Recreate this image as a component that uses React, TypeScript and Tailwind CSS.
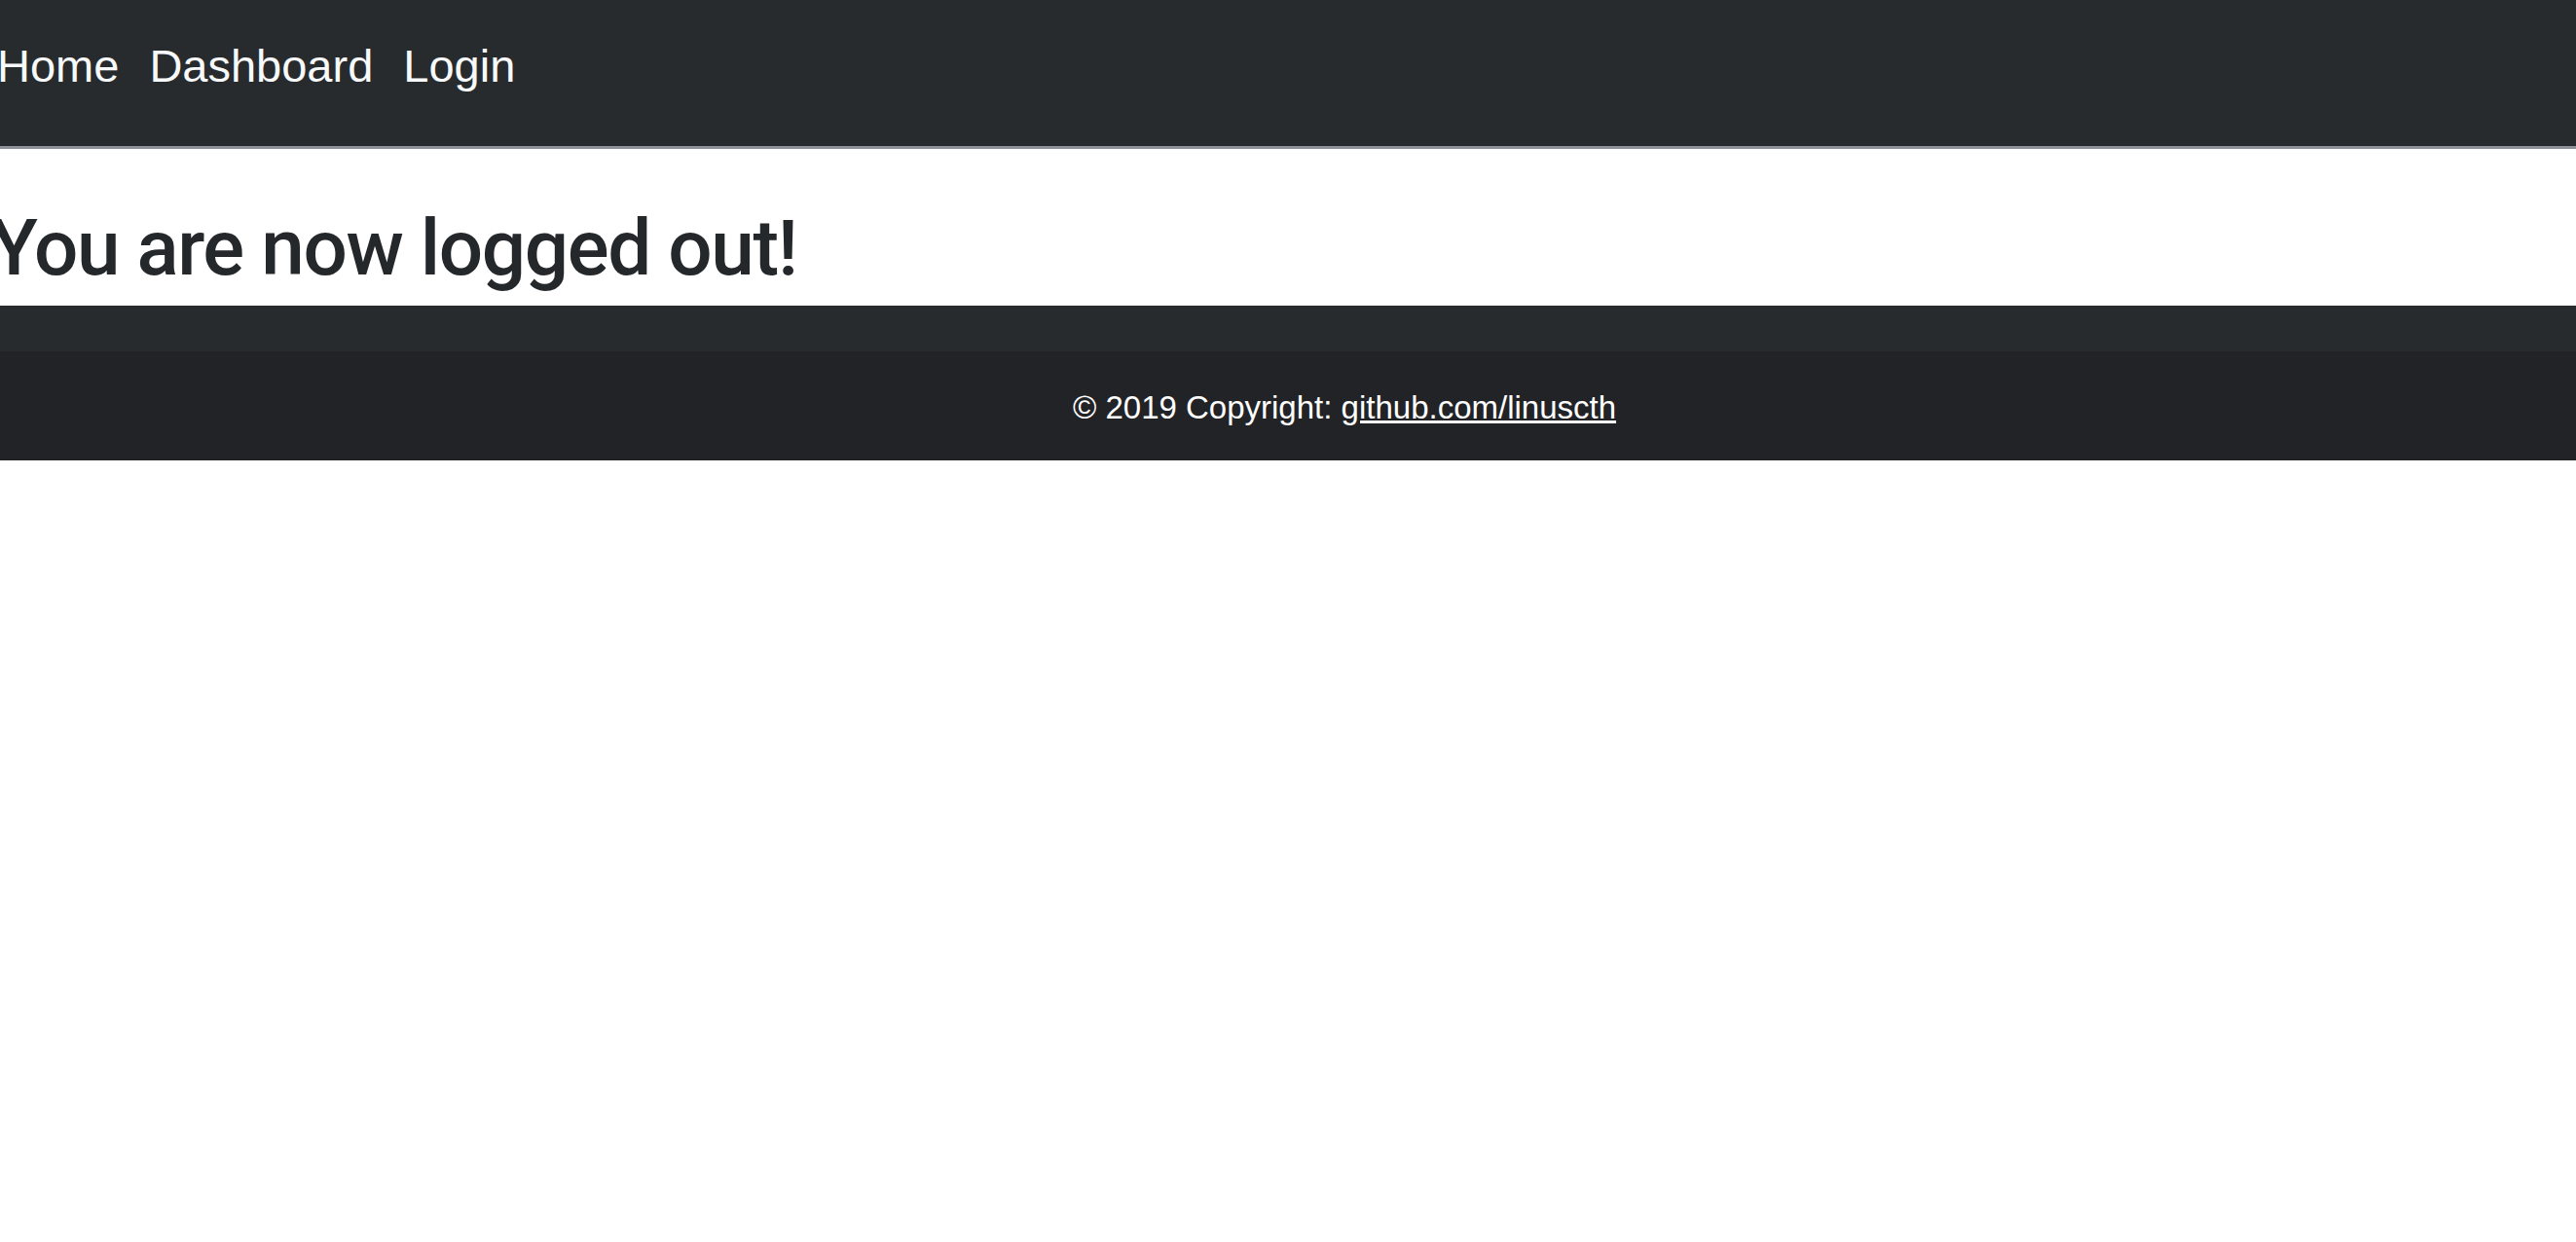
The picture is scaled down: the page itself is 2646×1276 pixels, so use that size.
const font = { fontFamily: '"Liberation Sans", Arial, sans-serif' };

const App = () => {
  return (
    <div className="min-h-screen bg-white" style={font}>
      {/* Navbar */}
      <header className="h-[153px] bg-[#272b2e] border-b-[3px] border-[#8d9299]">
        <nav className="flex items-center gap-[31px] pt-[40px] -ml-[3px]">
          <a href="#" className="text-[47px] leading-[56px] text-[#f8f9fa]">Home</a>
          <a href="#" className="text-[47px] leading-[56px] text-[#f8f9fa]">Dashboard</a>
          <a href="#" className="text-[47px] leading-[56px] text-[#f8f9fa]">Login</a>
        </nav>
      </header>

      {/* Content */}
      <main className="pt-[54px] pb-[11px] -ml-[10px]">
        <h1 className="font-['Roboto',_sans-serif] text-[80px] leading-[96px] font-medium tracking-[-1.4px] text-[#25282b]">
          You are now logged out!
        </h1>
      </main>

      {/* Footer */}
      <footer className="bg-[#272b2e]">
        <div className="h-[47px]" />
        <div className="bg-[#222326] pt-[39px] pb-[36px] pl-[116px] text-center">
          <p className="text-[33px] leading-[37px] text-white">
            © 2019 Copyright: <a href="#" className="underline">github.com/linuscth</a>
          </p>
        </div>
      </footer>
    </div>
  );
};

export default App;
